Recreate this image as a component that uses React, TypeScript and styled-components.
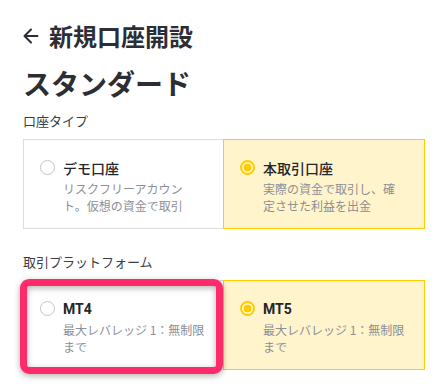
import React from "react";
import styled, { createGlobalStyle } from "styled-components";

const GlobalStyle = createGlobalStyle`
  html, body {
    margin: 0;
    padding: 0;
    background: #ffffff;
  }
  body {
    font-family: "Noto Sans CJK JP", "Roboto", sans-serif;
    color: #2b2e35;
  }
`;

type Option = {
  id: string;
  label: string;
  desc: string;
  selected: boolean;
};

const accountTypes: Option[] = [
  {
    id: "demo",
    label: "デモ口座",
    desc: "リスクフリーアカウント。仮想の資金で取引",
    selected: false,
  },
  {
    id: "real",
    label: "本取引口座",
    desc: "実際の資金で取引し、確定させた利益を出金",
    selected: true,
  },
];

const platforms: Option[] = [
  { id: "mt4", label: "MT4", desc: "最大レバレッジ 1：無制限まで", selected: false },
  { id: "mt5", label: "MT5", desc: "最大レバレッジ 1：無制限まで", selected: true },
];

const App = () => {
  return (
    <>
      <GlobalStyle />
      <Page lang="ja">
        <Header>
          <BackButton>
            <svg width="16" height="16" viewBox="0 0 16 16" fill="none">
              <path
                d="M14.5 8H1.5M8 1.5L1.5 8L8 14.5"
                stroke="#2b2e35"
                strokeWidth="2"
                strokeLinecap="round"
                strokeLinejoin="round"
              />
            </svg>
          </BackButton>
          <HeaderTitle>新規口座開設</HeaderTitle>
        </Header>

        <PlanTitle>スタンダード</PlanTitle>

        <SectionLabel>口座タイプ</SectionLabel>
        <OptionGrid>
          {accountTypes.map((o) => (
            <OptionCard key={o.id} selected={o.selected}>
              <Radio selected={o.selected} />
              <OptionText>
                <OptionLabel>{o.label}</OptionLabel>
                <OptionDesc>{o.desc}</OptionDesc>
              </OptionText>
            </OptionCard>
          ))}
        </OptionGrid>

        <SectionLabel top={24}>取引プラットフォーム</SectionLabel>
        <OptionGrid>
          {platforms.map((o) => (
            <OptionCard key={o.id} selected={o.selected}>
              <Radio selected={o.selected} />
              <OptionText>
                <OptionLabel latin>{o.label}</OptionLabel>
                <OptionDesc>{o.desc}</OptionDesc>
              </OptionText>
            </OptionCard>
          ))}
          <Highlight />
        </OptionGrid>
      </Page>
    </>
  );
};

const Page = styled.div`
  width: 442px;
  height: 392px;
  box-sizing: border-box;
  padding: 20px 18px 0 23px;
  overflow: hidden;
`;

const Header = styled.div`
  display: flex;
  align-items: center;
  height: 32px;
`;

const BackButton = styled.div`
  width: 16px;
  height: 16px;
  display: flex;
  margin-right: 10px;
  cursor: pointer;
`;

const HeaderTitle = styled.h1`
  margin: 0;
  font-size: 24px;
  line-height: 32px;
  font-weight: 700;
  color: #2b2e35;
`;

const PlanTitle = styled.h2`
  margin: 11px 0 0 0;
  font-size: 28px;
  line-height: 40px;
  font-weight: 700;
  color: #2b2e35;
`;

const SectionLabel = styled.div<{ top?: number }>`
  margin-top: ${(p) => p.top ?? 9}px;
  font-size: 13px;
  line-height: 18px;
  color: #3a3d44;
  margin-bottom: 9px;
`;

const OptionGrid = styled.div`
  position: relative;
  display: grid;
  grid-template-columns: 201px 201px;
  width: 401px;
`;

const OptionCard = styled.div<{ selected: boolean }>`
  position: relative;
  z-index: ${(p) => (p.selected ? 1 : 0)};
  display: flex;
  align-items: flex-start;
  gap: 8px;
  height: 90px;
  box-sizing: border-box;
  padding: 19px 16px 0 16px;
  border: 1px solid ${(p) => (p.selected ? "#ffcc00" : "#dcdcdc")};
  background: ${(p) => (p.selected ? "#fff4cc" : "#ffffff")};
  & + & {
    margin-left: -1px;
  }
`;

const Radio = styled.span<{ selected: boolean }>`
  flex: none;
  width: 15px;
  height: 15px;
  margin-top: 1px;
  box-sizing: border-box;
  border-radius: 50%;
  border: ${(p) => (p.selected ? "2px solid #ffcc00" : "1px solid #c4c4c4")};
  background: ${(p) =>
    p.selected ? "radial-gradient(circle, #ffcc00 0 3.6px, #fff4cc 4.2px)" : "#ffffff"};
`;

const OptionText = styled.div`
  display: flex;
  flex-direction: column;
  min-width: 0;
`;

const OptionLabel = styled.div<{ latin?: boolean }>`
  font-family: ${(p) =>
    p.latin ? `"Roboto", "Noto Sans CJK JP", sans-serif` : "inherit"};
  font-size: 14px;
  line-height: 18px;
  font-weight: ${(p) => (p.latin ? 700 : 500)};
  color: #23262d;
`;

const OptionDesc = styled.div`
  max-width: 142px;
  margin-top: 3px;
  font-size: 12px;
  line-height: 17px;
  color: #8b8f97;
`;

const Highlight = styled.div`
  position: absolute;
  left: -3px;
  top: -1px;
  width: 203px;
  height: 95px;
  box-sizing: border-box;
  border: 7px solid #ff2a6a;
  border-radius: 9px;
  box-shadow: 0 2px 6px rgba(0, 0, 0, 0.3), inset 0 2px 6px rgba(0, 0, 0, 0.3);
  pointer-events: none;
  z-index: 2;
`;

export default App;
